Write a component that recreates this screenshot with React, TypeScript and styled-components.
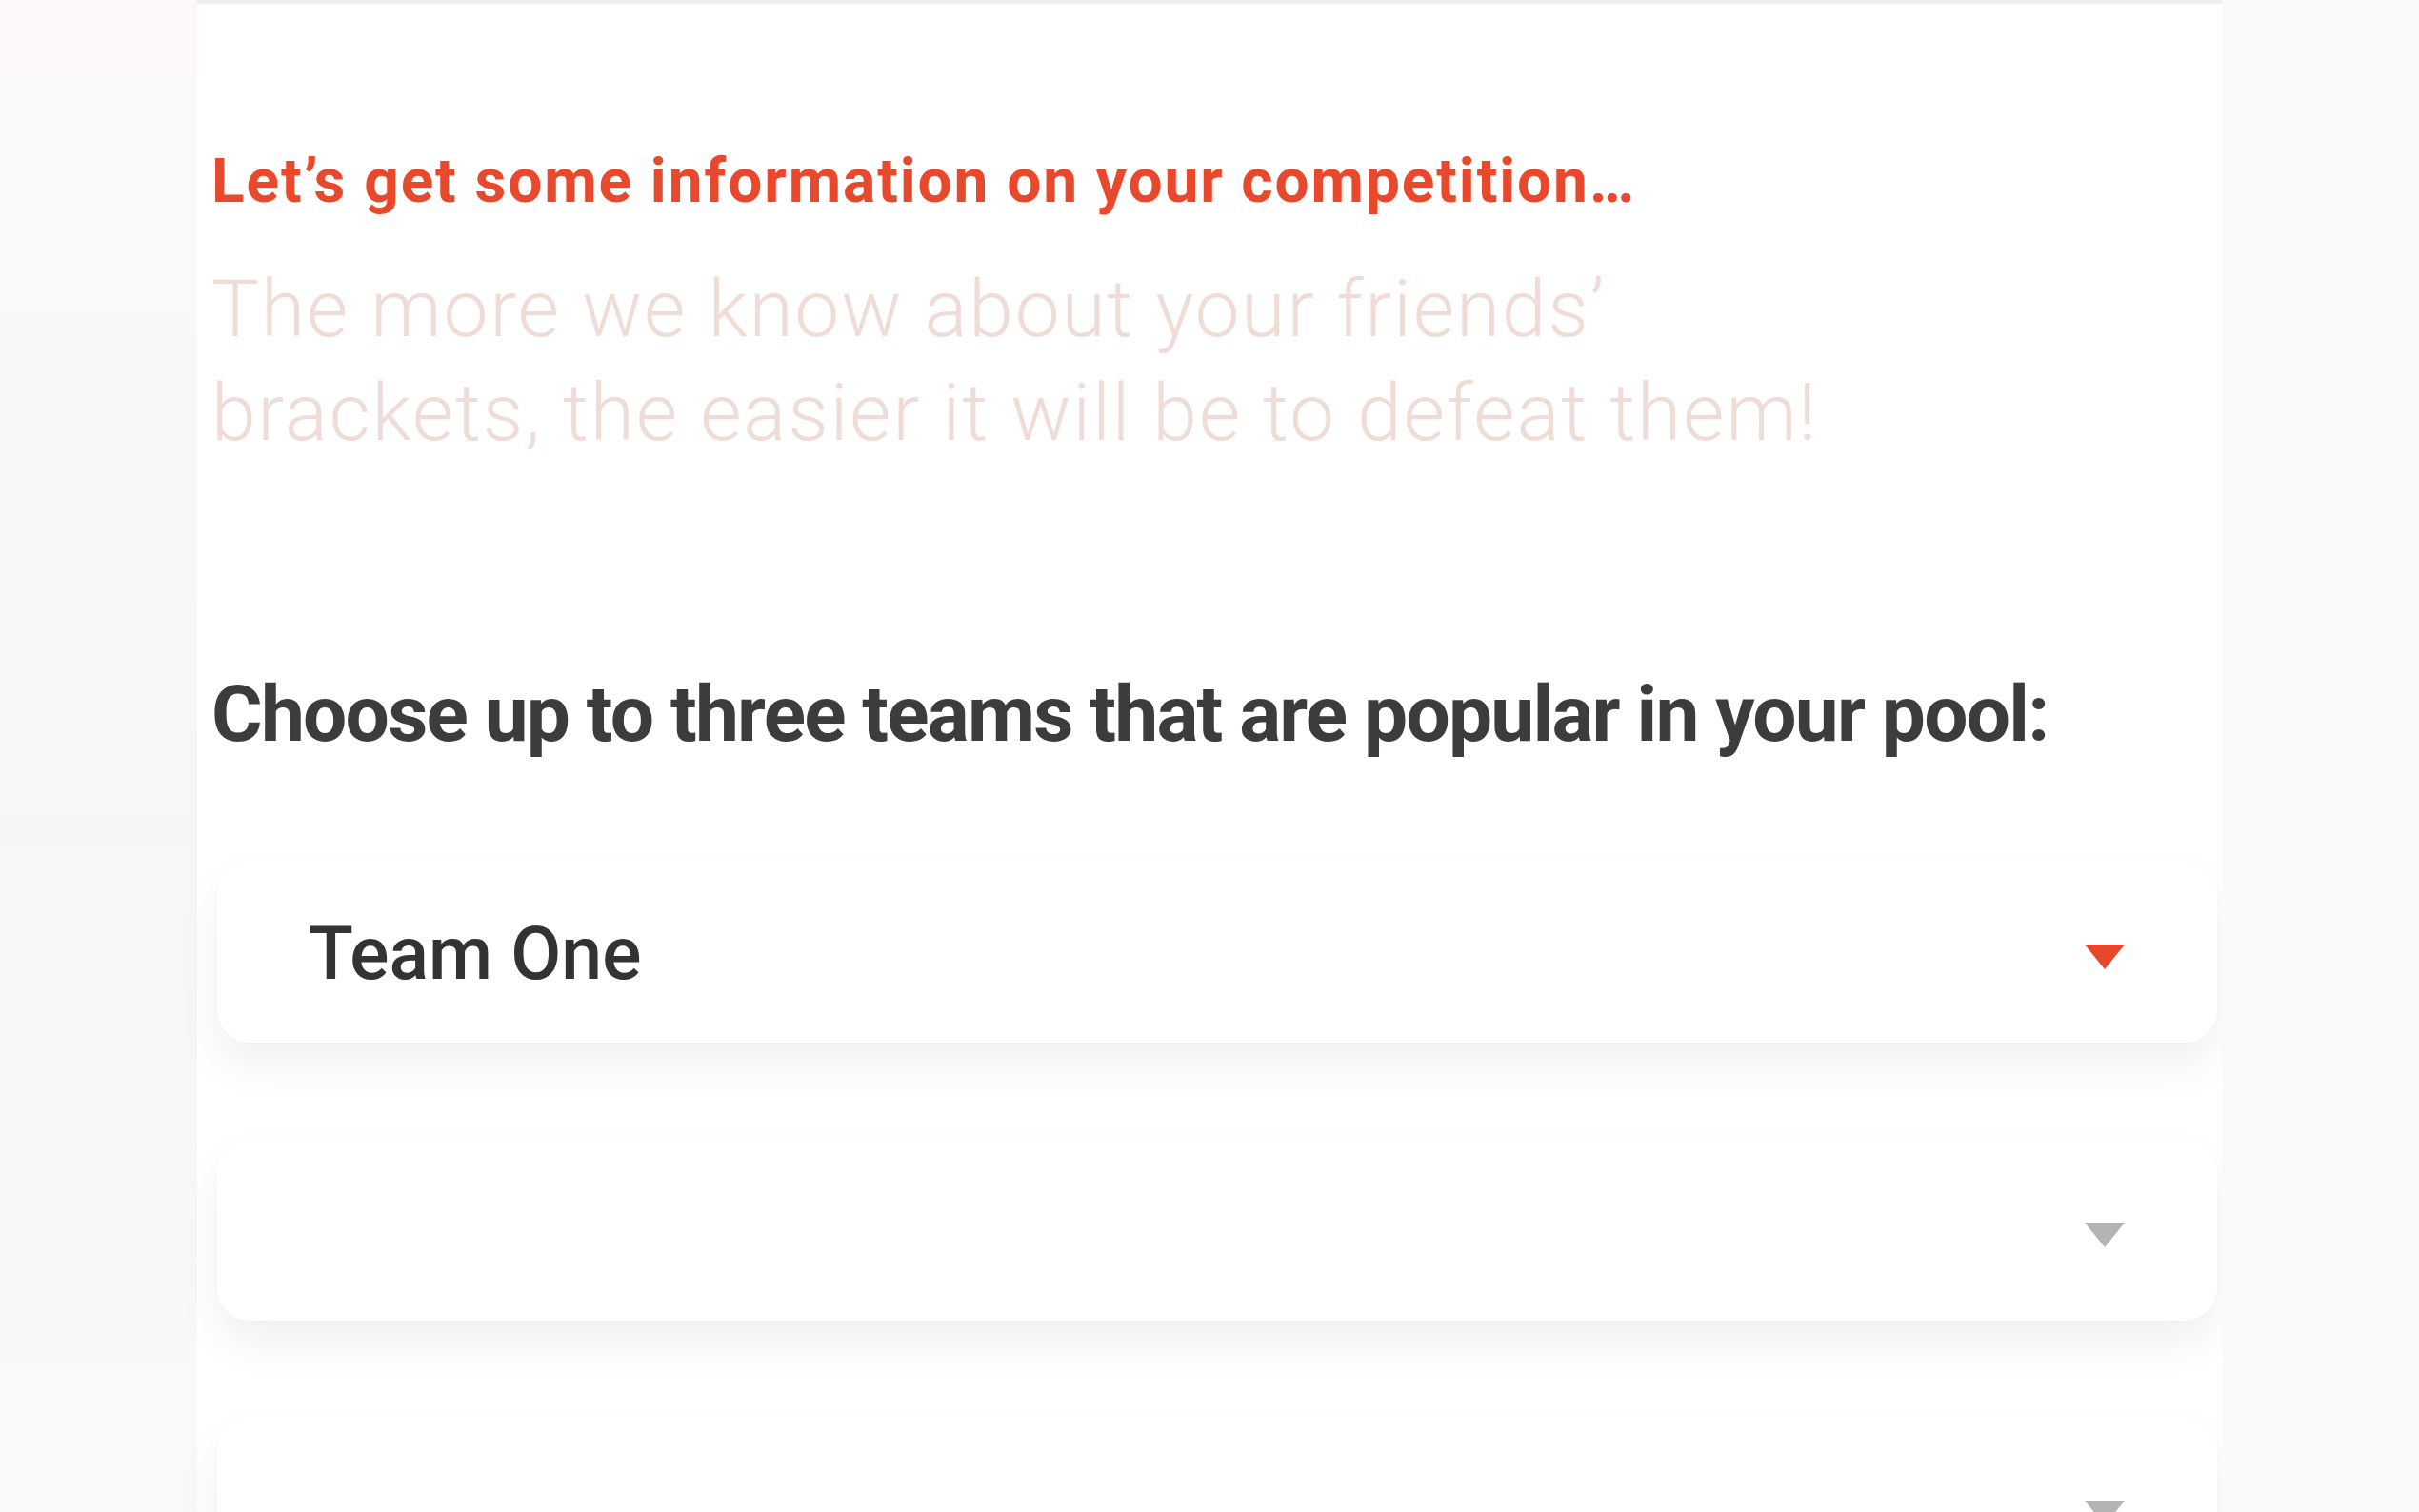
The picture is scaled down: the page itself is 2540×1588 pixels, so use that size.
import React from "react";
import styled, { createGlobalStyle } from "styled-components";

const GlobalStyle = createGlobalStyle`
  html, body {
    margin: 0;
    padding: 0;
    background: #fafafa;
  }
  body {
    font-family: Roboto, "Liberation Sans", Arial, sans-serif;
    -webkit-font-smoothing: antialiased;
  }
`;

const Page = styled.div`
  display: flex;
  width: 2540px;
  height: 1588px;
  overflow: hidden;
`;

const LeftGutter = styled.div`
  width: 207px;
  flex: none;
  background: linear-gradient(180deg, #fbf8f7 0%, #faf8f7 30%, #f6f6f6 55%, #f9f9f9 100%);
`;

const RightGutter = styled.div`
  flex: 1;
  background: #fafafa;
`;

const Card = styled.main`
  width: 2126px;
  flex: none;
  background: #ffffff;
  border-top: 4px solid #efefef;
  box-sizing: border-box;
  padding: 155px 5px 0 15px;
  display: flex;
  flex-direction: column;
`;

const Eyebrow = styled.h2`
  margin: 0;
  font-family: Roboto, "Liberation Sans", sans-serif;
  font-weight: 700;
  font-size: 64px;
  line-height: 64px;
  color: #e8492d;
  letter-spacing: 1.9px;
  white-space: nowrap;
`;

const Lead = styled.p`
  margin: 47px 0 0;
  font-family: Roboto, "Liberation Sans", sans-serif;
  font-weight: 300;
  font-size: 84px;
  line-height: 109px;
  letter-spacing: 1.75px;
  color: #efdcd7;
  white-space: nowrap;
`;

const Prompt = styled.h3`
  margin: 221px 0 0;
  font-family: Roboto, "Liberation Sans", sans-serif;
  font-weight: 700;
  font-size: 82px;
  line-height: 82px;
  letter-spacing: -1.75px;
  color: #3c3c3c;
  white-space: nowrap;
`;

const SelectList = styled.div`
  margin: 113px 0 0 6px;
  display: flex;
  flex-direction: column;
  gap: 101px;
`;

const Select = styled.div`
  height: 191px;
  flex: none;
  box-sizing: border-box;
  border-radius: 34px;
  background: #ffffff;
  box-shadow: 0 24px 46px rgba(0, 0, 0, 0.06), 0 0 6px rgba(0, 0, 0, 0.02);
  display: flex;
  align-items: center;
  justify-content: space-between;
  padding: 6px 95px 0 96px;
`;

const SelectValue = styled.span`
  font-family: Roboto, "Liberation Sans", sans-serif;
  font-weight: 500;
  font-size: 77px;
  line-height: 1;
  color: #333333;
`;

const Caret = styled.svg<{ $active?: boolean }>`
  width: 46px;
  height: 30px;
  margin-top: 4px;
  flex: none;
  fill: ${(p) => (p.$active ? "#e8472c" : "#b4b4b4")};
`;

const CaretIcon = ({ active }: { active?: boolean }) => (
  <Caret $active={active} viewBox="0 0 46 30" aria-hidden="true">
    <path d="M2 2 H44 L23 28 Z" strokeLinejoin="round" />
  </Caret>
);

export default function App() {
  const teams = ["Team One", "", ""];
  return (
    <>
      <GlobalStyle />
      <Page>
        <LeftGutter />
        <Card>
          <Eyebrow>Let’s get some information on your competition…</Eyebrow>
          <Lead>
            The more we know about your friends’
            <br />
            brackets, the easier it will be to defeat them!
          </Lead>
          <Prompt>Choose up to three teams that are popular in your pool:</Prompt>
          <SelectList>
            {teams.map((t, i) => (
              <Select key={i}>
                <SelectValue>{t}</SelectValue>
                <CaretIcon active={t !== ""} />
              </Select>
            ))}
          </SelectList>
        </Card>
        <RightGutter />
      </Page>
    </>
  );
}
